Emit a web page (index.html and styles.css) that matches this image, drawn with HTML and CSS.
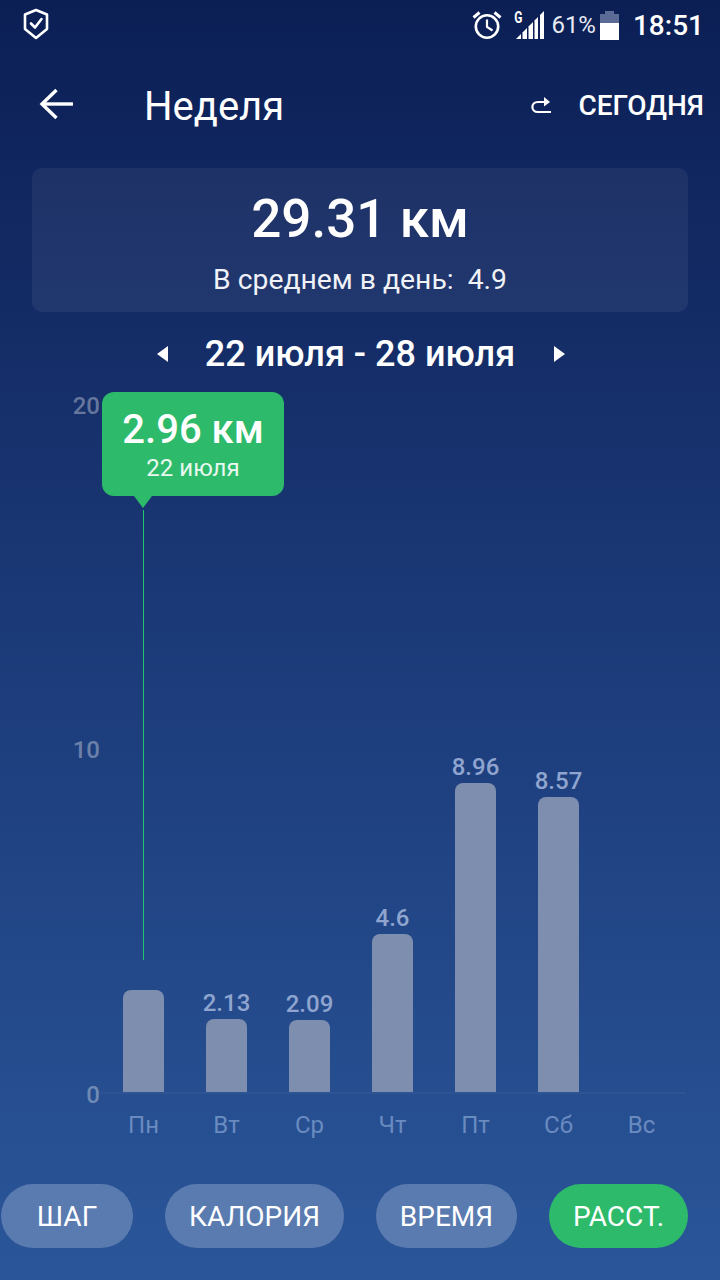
FILE: index.html
```html
<!DOCTYPE html>
<html lang="ru">
<head>
  <meta charset="UTF-8">
  <title>Неделя</title>
  <link rel="stylesheet" href="styles.css">
</head>
<body>
  <div class="status-bar">
    <svg class="shield" width="26" height="32" viewBox="0 0 26 32" fill="none" stroke="#fff" stroke-width="2.6" stroke-linejoin="round" stroke-linecap="round">
      <path d="M13 2 L24 6.5 V21 L13 30 L2 21 V6.5 Z"/>
      <path d="M8 15.5 L12 19.5 L18.5 11"/>
    </svg>
    <div class="status-right">
      <svg class="alarm" width="30" height="30" viewBox="0 0 30 30" fill="none" stroke="#fff" stroke-width="2.6">
        <circle cx="15" cy="16.5" r="11.2"/>
        <path d="M15 9.5 V17 L20.5 20.5" stroke-width="2.2"/>
        <path d="M1.5 7.5 L7.5 2.5 M28.5 7.5 L22.5 2.5" stroke-width="3"/>
      </svg>
      <div class="signal">
        <span class="signal-g">G</span>
        <svg width="28" height="30" viewBox="0 0 28 30" fill="#fff">
          <path d="M0 29 L5 24 V29 Z"/>
          <path d="M6.5 22.5 L11 18 V29 H6.5 Z"/>
          <path d="M12.5 16.5 L17 12 V29 H12.5 Z"/>
          <path d="M18.5 10.5 L22 7 V29 H18.5 Z"/>
          <path d="M24 5 L28 1 V29 H24 Z"/>
        </svg>
      </div>
      <span class="battery-text">61%</span>
      <div class="battery"><div class="battery-cap"></div><div class="battery-body"><div class="battery-fill"></div></div></div>
      <span class="clock">18:51</span>
    </div>
  </div>

  <div class="header">
    <svg class="back" width="36" height="32" viewBox="0 0 36 32" fill="none" stroke="#fff" stroke-width="3.4">
      <path d="M34 16 H4"/>
      <path d="M17.5 2 L3 16 L17.5 30"/>
    </svg>
    <div class="title">Неделя</div>
    <svg class="today-icon" width="22" height="18" viewBox="0 0 22 18" fill="none" stroke="#fff" stroke-width="2.2">
      <path d="M21 16 H8 C0.5 16 0.5 6 8 6 H19"/>
      <path d="M14 1 L20 6 L14 10.5" fill="#fff" stroke="none"/>
    </svg>
    <div class="today">СЕГОДНЯ</div>
  </div>

  <div class="summary">
    <div class="summary-value">29.31 км</div>
    <div class="summary-avg">В среднем в день:&nbsp; 4.9</div>
  </div>

  <div class="range">
    <span class="arrow-left"></span>
    <span class="range-text">22 июля - 28 июля</span>
    <span class="arrow-right"></span>
  </div>

  <div class="chart">
    <div class="y-label y-20">20</div>
    <div class="y-label y-10">10</div>
    <div class="y-label y-0">0</div>
    <div class="axis"></div>

    <div class="marker-line"></div>
    <div class="tip">
      <div class="tip-value">2.96 км</div>
      <div class="tip-date">22 июля</div>
    </div>

    <div class="bars">
      <div class="col"><div class="bar" style="height:102px"></div></div>
      <div class="col"><div class="bar-value">2.13</div><div class="bar" style="height:73px"></div></div>
      <div class="col"><div class="bar-value">2.09</div><div class="bar" style="height:72px"></div></div>
      <div class="col"><div class="bar-value">4.6</div><div class="bar" style="height:158px"></div></div>
      <div class="col"><div class="bar-value">8.96</div><div class="bar" style="height:309px"></div></div>
      <div class="col"><div class="bar-value">8.57</div><div class="bar" style="height:295px"></div></div>
      <div class="col"></div>
    </div>
    <div class="days">
      <span>Пн</span><span>Вт</span><span>Ср</span><span>Чт</span><span>Пт</span><span>Сб</span><span>Вс</span>
    </div>
  </div>

  <div class="tabs">
    <div class="tab tab-step">ШАГ</div>
    <div class="tab tab-cal">КАЛОРИЯ</div>
    <div class="tab tab-time">ВРЕМЯ</div>
    <div class="tab tab-dist active">РАССТ.</div>
  </div>
</body>
</html>
```

FILE: styles.css
```css
* {
  box-sizing: border-box;
}
html, body {
  margin: 0;
  padding: 0;
}
body {
  width: 720px;
  height: 1280px;
  overflow: hidden;
  font-family: Roboto, "Liberation Sans", sans-serif;
  color: #fff;
  background: linear-gradient(180deg, #0b1f55 0%, #142c66 25%, #1d3d7c 55%, #2a5699 100%);
}

.status-bar {
  height: 68px;
  padding: 8px 16px 0 23px;
  display: flex;
  justify-content: space-between;
  align-items: flex-start;
}
.status-right {
  display: flex;
  align-items: center;
  height: 34px;
}
.signal {
  display: flex;
  margin-left: 14px;
  position: relative;
  width: 29px;
  height: 30px;
}
.signal-g {
  position: absolute;
  left: -3px;
  top: 0;
  font-size: 16px;
  font-weight: 700;
  line-height: 16px;
  transform: scaleX(0.75);
}
.battery-text {
  font-size: 24px;
  margin-left: 6px;
  color: #e8ebf3;
}
.battery {
  margin-left: 4px;
  width: 19px;
}
.battery-cap {
  width: 9px;
  height: 3px;
  margin: 0 auto;
  background: #5c6b96;
}
.battery-body {
  height: 26px;
  background: #5c6b96;
  display: flex;
  align-items: flex-end;
}
.battery-fill {
  width: 100%;
  height: 17px;
  background: #fff;
}
.clock {
  font-size: 28px;
  font-weight: 500;
  margin-left: 14px;
}

.header {
  height: 64px;
  padding: 9px 16px 0 39px;
  display: flex;
  align-items: center;
}
.back {
  margin-bottom: 2px;
}
.title {
  font-size: 40px;
  margin: 3px 0 0 69px;
  flex: 1;
}
.today-icon {
  margin-right: 26px;
}
.today {
  font-size: 28px;
  font-weight: 500;
  margin-top: 2px;
}

.summary {
  margin: 36px 32px 0;
  height: 144px;
  border-radius: 10px;
  background: rgba(255,255,255,0.06);
  text-align: center;
}
.summary-value {
  font-size: 53px;
  font-weight: 500;
  padding-top: 20px;
  line-height: 62px;
}
.summary-avg {
  font-size: 28.3px;
  margin-top: 14px;
  line-height: 32px;
  color: #f0f2f7;
}

.range {
  height: 80px;
  padding: 4px 0 0 2px;
  display: flex;
  align-items: center;
  justify-content: center;
}
.range-text {
  font-size: 36px;
  font-weight: 500;
  margin: 0 39px 0 37px;
}
.arrow-left, .arrow-right {
  width: 0;
  height: 0;
  border-top: 8px solid transparent;
  border-bottom: 8px solid transparent;
}
.arrow-left {
  border-right: 11px solid #fff;
}
.arrow-right {
  border-left: 11px solid #fff;
}

.chart {
  position: relative;
  height: 792px;
}
.y-label {
  position: absolute;
  left: 60px;
  width: 40px;
  text-align: right;
  font-size: 24px;
  font-weight: 500;
  line-height: 28px;
  color: rgba(255,255,255,0.35);
}
.y-20 { top: 0; }
.y-10 { top: 344px; }
.y-0 { top: 689px; }
.axis {
  position: absolute;
  left: 100px;
  right: 34px;
  top: 700px;
  height: 2px;
  background: rgba(255,255,255,0.04);
}
.marker-line {
  position: absolute;
  left: 143px;
  top: 118px;
  width: 1px;
  height: 450px;
  background: #22c46e;
}
.tip {
  position: absolute;
  left: 102px;
  top: 0;
  width: 182px;
  height: 104px;
  border-radius: 12px;
  background: #2dbb6b;
  text-align: center;
}
.tip::after {
  content: "";
  position: absolute;
  left: 32px;
  top: 104px;
  border-left: 9px solid transparent;
  border-right: 9px solid transparent;
  border-top: 12px solid #2dbb6b;
}
.tip-value {
  font-size: 40px;
  font-weight: 500;
  line-height: 44px;
  padding-top: 16px;
}
.tip-date {
  font-size: 24px;
  line-height: 28px;
  margin-top: 2px;
  color: #e9f8ef;
}

.bars {
  position: absolute;
  left: 102px;
  top: 0;
  width: 581px;
  height: 700px;
  display: grid;
  grid-template-columns: repeat(7, 83px);
  align-items: end;
}
.col {
  display: flex;
  flex-direction: column;
  align-items: center;
}
.bar {
  width: 41px;
  border-radius: 8px 8px 0 0;
  background: #7e8eae;
}
.bar-value {
  font-size: 24px;
  font-weight: 500;
  line-height: 28px;
  margin-bottom: 2px;
  color: #8fa5cf;
}
.days {
  position: absolute;
  left: 102px;
  top: 718px;
  display: grid;
  grid-template-columns: repeat(7, 83px);
  text-align: center;
  font-size: 24px;
  line-height: 30px;
  color: #6a8bc0;
}

.tabs {
  position: absolute;
  top: 1184px;
  left: 1px;
  display: flex;
  gap: 32px;
}
.tab {
  height: 64px;
  border-radius: 32px;
  background: #5a7bb0;
  font-size: 28px;
  line-height: 66px;
  text-align: center;
}
.tab-step { width: 132px; }
.tab-cal { width: 179px; }
.tab-time { width: 141px; }
.tab-dist { width: 139px; }
.active {
  background: #2dbb6b;
}
```
